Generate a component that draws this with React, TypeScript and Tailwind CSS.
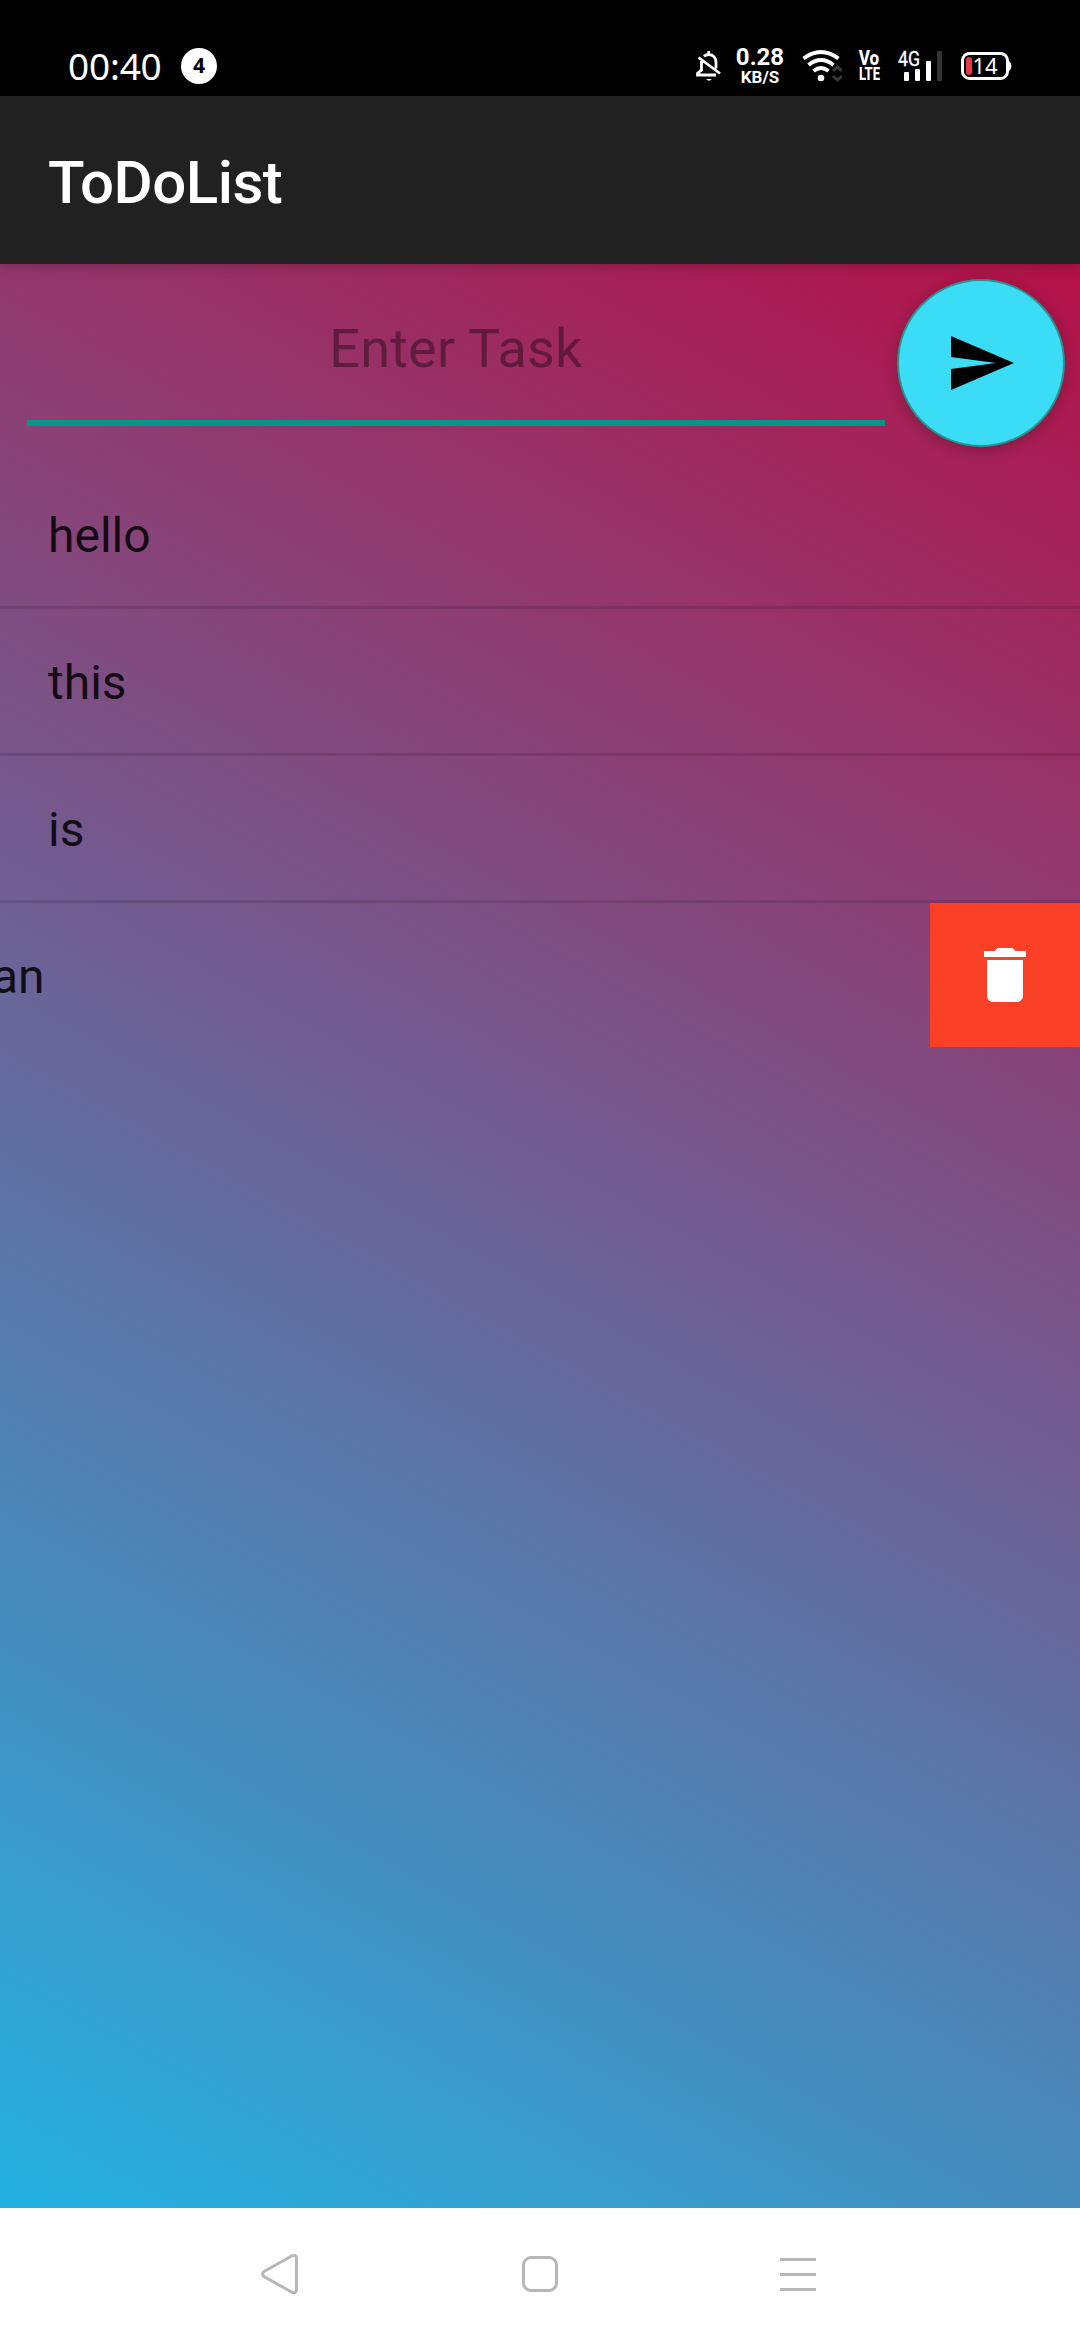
import React from "react";

const tasks = ["hello", "this", "is"];

function StatusBar() {
  return (
    <div className="flex h-24 shrink-0 items-start bg-black pl-[68px] text-white">
      <div className="mt-[44px] w-[113px] font-['Noto_Sans'] text-[37px] leading-[44px] font-normal tracking-[-0.2px] whitespace-nowrap">00:40</div>
      <div className="mt-12 flex size-9 items-center justify-center rounded-full bg-white font-['Open_Sans'] text-[21px] font-bold text-black">4</div>
      <svg className="mt-[50px] ml-[479px] h-8 w-[26px] shrink-0" viewBox="0 0 26 32" fill="none" stroke="#fff" strokeWidth="2.8">
        <path d="M8 6.5C9.5 5 11 4.5 12.700 4.500C17.500 4.500 20 8.500 20 12V18.500M5.500 11V20L1.500 23.500V25H20M12.700 1V4.500M2.500 7.500L24 23.500" />
        <path d="M10 29H16L13 31Z" fill="#fff" stroke="none" />
      </svg>
      <div className="mt-[45px] ml-[13px] flex w-[50px] flex-col items-center font-['Roboto'] font-bold whitespace-nowrap">
        <span className="text-[24px] leading-[25px]">0.28</span>
        <span className="text-[17px] leading-[15px]">KB/S</span>
      </div>
      <svg className="mt-[50px] ml-[17px] h-8 w-10 shrink-0" viewBox="0 0 40 32" fill="none">
        <path d="M1.500 8.500Q19 -4.500 36.500 8.500M6.500 15Q19 5 31.500 15M11.500 21Q19 15 26.500 21" stroke="#fff" strokeWidth="3.800" />
        <circle cx="19" cy="28" r="3.300" fill="#fff" />
        <path d="M31 21L35.500 17L40 21M31 26L35.500 30L40 26" stroke="#3a3a3a" strokeWidth="3" />
      </svg>
      <div className="mt-[51px] ml-[15px] flex w-[24px] flex-col items-center font-['Roboto'] font-extrabold whitespace-nowrap">
        <span className="origin-center scale-x-85 text-[20px] leading-[15px]">Vo</span>
        <span className="origin-center scale-x-[0.68] text-[19px] leading-[15px]">LTE</span>
      </div>
      <svg className="mt-[48px] ml-[17px] h-9 w-[46px] shrink-0" viewBox="0 0 46 36">
        <text x="0" y="18" className="font-['Roboto'] text-[20px]" fill="#fff" stroke="#fff" strokeWidth=".3" textLength="22" lengthAdjust="spacingAndGlyphs">4G</text>
        <g fill="#fff">
          <rect x="6" y="24" width="5" height="9" rx="1" />
          <rect x="17" y="21" width="5" height="12" rx="1" />
          <rect x="28" y="13" width="5" height="20" rx="1" />
          <rect x="39" y="3" width="5" height="30" rx="1" fill="#333" />
        </g>
      </svg>
      <svg className="mt-[51px] ml-[16px] h-[30px] w-[52px] shrink-0" viewBox="0 0 52 30">
        <rect x="2.500" y="2.500" width="45" height="25" rx="7" fill="none" stroke="#fff" strokeWidth="3" />
        <path d="M49 10Q51.500 12 51.500 15T49 20Z" fill="#fff" />
        <rect x="6" y="6" width="6" height="18" rx="3" fill="#e8374a" />
        <text x="12.500" y="22.500" className="font-['Noto_Sans'] text-[22px]" fill="#fff">14</text>
      </svg>
    </div>
  );
}

function NavigationBar() {
  return (
    <div className="flex h-[132px] shrink-0 items-start bg-white pt-[44px] pl-[260px] text-[#b7b7b7]">
      <svg className="h-[44px] w-[40px]" viewBox="0 0 40 44" fill="none" stroke="currentColor" strokeWidth="3">
        <path d="M4 19.500L31.500 4Q36.500 2 36.500 6.500V37.500Q36.500 42 31.500 40L4 24.500Q1 22 4 19.500Z" />
      </svg>
      <div className="mt-[4px] ml-[222px] size-9 rounded-[9px] border-[3px] border-current" />
      <div className="mt-[6px] ml-[222px] flex w-9 flex-col gap-[12px]">
        <div className="h-[3px] bg-current" />
        <div className="h-[3px] bg-current" />
        <div className="h-[3px] bg-current" />
      </div>
    </div>
  );
}

export default function App() {
  return (
    <div className="flex h-[2340px] w-[1080px] flex-col overflow-hidden font-['Roboto',sans-serif]">
      <StatusBar />
      <header className="z-10 flex h-[168px] shrink-0 items-center bg-[#212121] pt-[5px] pl-12 shadow-[0_2px_12px_rgba(0,0,0,0.22)]">
        <h1 className="text-[60px] font-medium tracking-[-0.5px] text-white">ToDoList</h1>
      </header>
      <main className="flex flex-1 flex-col bg-[linear-gradient(29.05deg,#24b2e1,#6c6296,#b41147)]">
        <div className="flex h-[198px] shrink-0">
          <div className="mt-[15px] ml-[27px] flex h-[147px] w-[858px] items-center justify-center border-b-[6px] border-[#009688] pb-[2px]">
            <span className="text-[54px] tracking-[0.2px] text-black/[0.38]">Enter Task</span>
          </div>
          <button className="mt-[15px] ml-[12px] flex size-[168px] items-center justify-center rounded-full border-2 border-[#27958f] bg-[#3adcf6] shadow-[0_3px_14px_rgba(0,0,0,0.24)]">
            <svg className="h-[72px] w-[72px]" viewBox="0 0 24 24">
              <path d="M2 3L23 12L2 21V14L17 12L2 10Z" />
            </svg>
          </button>
        </div>
        <ul className="text-[48px] text-black/85">
          {tasks.map((task) => (
            <li key={task} className="flex h-[147px] items-center border-b-[3px] border-black/[0.12] pt-[3px] pl-12">{task}</li>
          ))}
          <li className="flex h-36 items-center justify-between">
            <span className="-ml-[8px] pt-[3px]">an</span>
            <button className="flex h-36 w-[150px] items-center justify-center bg-[#fb4028]">
              <svg className="h-[72px] w-[72px]" viewBox="0 0 24 24" fill="#fff">
                <path d="M6 19c0 1.100.900 2 2 2h8c1.100 0 2-.900 2-2V7H6v12zM19 4h-3.500l-1-1h-5l-1 1H5v2h14V4z" />
              </svg>
            </button>
          </li>
        </ul>
      </main>
      <NavigationBar />
    </div>
  );
}
